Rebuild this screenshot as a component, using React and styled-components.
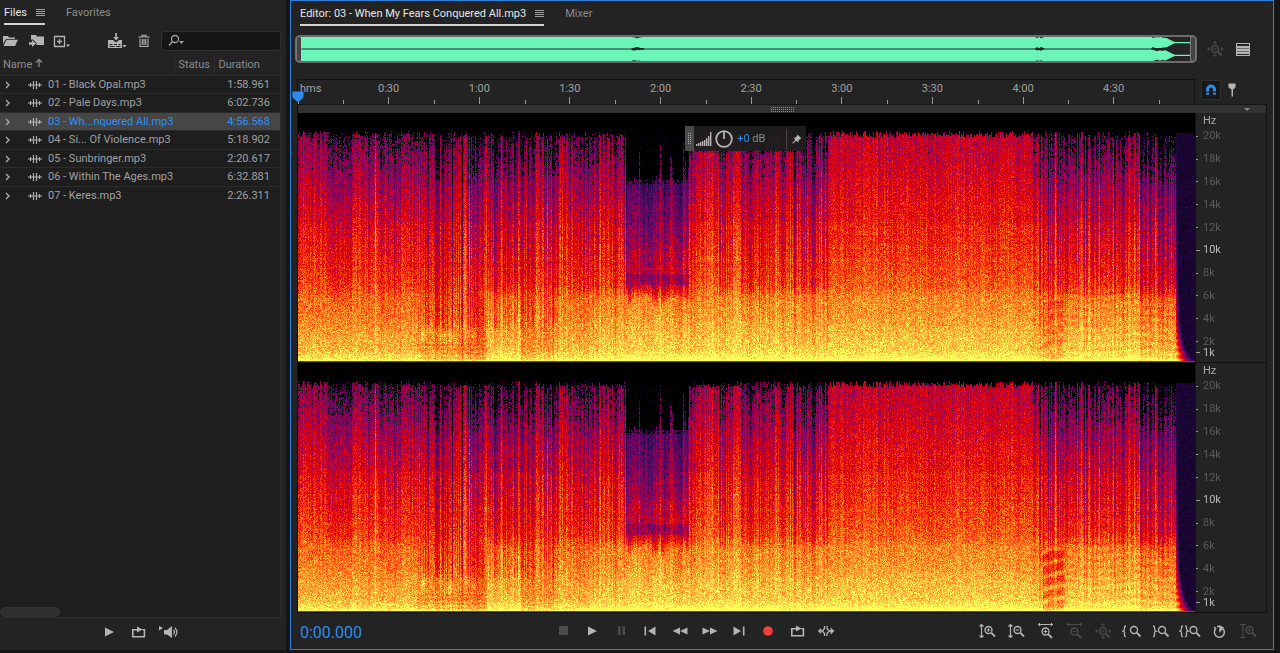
import React, { useLayoutEffect, useRef } from "react";
import styled, { createGlobalStyle } from "styled-components";

const GlobalStyle = createGlobalStyle`
  * {
    box-sizing: border-box;
  }

  body {
    margin: 0;
    background-color: #161616;
    color: #a0a0a0;
    font-family: Roboto, "Noto Sans", sans-serif;
    font-size: 11px;
    line-height: 16px;
  }

  button, input {
    font: inherit;
    color: inherit;
  }
`;

const DURATION = 296.568;

const files = [
  { name: "01 - Black Opal.mp3", duration: "1:58.961" },
  { name: "02 - Pale Days.mp3", duration: "6:02.736" },
  { name: "03 - Wh...nquered All.mp3", duration: "4:56.568", active: true },
  { name: "04 - Si... Of Violence.mp3", duration: "5:18.902" },
  { name: "05 - Sunbringer.mp3", duration: "2:20.617" },
  { name: "06 - Within The Ages.mp3", duration: "6:32.881" },
  { name: "07 - Keres.mp3", duration: "2:26.311" },
];

const rulerLabels = ["0:30", "1:00", "1:30", "2:00", "2:30", "3:00", "3:30", "4:00", "4:30"];

const hzLabels = ["20k", "18k", "16k", "14k", "12k", "10k", "8k", "6k", "4k", "2k"];

/* ---------- layout ---------- */

const MainTemplate = styled.div`
  min-height: 100vh;
  display: grid;
  grid-template-columns: 286px minmax(0, 1fr);
  column-gap: 4px;
  padding: 0 6px 4px 0;
`;

const FilesPanel = styled.section`
  display: flex;
  flex-direction: column;
  padding-right: 5px;
  background-color: #232323;
`;

const EditorPanel = styled.main`
  display: flex;
  flex-direction: column;
  min-width: 0;
  border: 1px solid #2d7fdc;
  background-color: #232323;
`;

const TabBar = styled.nav`
  display: flex;
  gap: 21px;
  height: 25px;
  padding-left: ${(props) => props.$indent}px;
`;

const TabItem = styled.div`
  display: flex;
  align-items: center;
  gap: 9px;
  padding-top: 1px;
  border-bottom: 2px solid ${(props) => (props.$active ? "#d4d4d4" : "transparent")};
`;

const Tab = styled.button`
  padding: 2px 0 0;
  border: 0;
  background: none;
  color: ${(props) => (props.$active ? "#e6e6e6" : "#8c8c8c")};
  white-space: nowrap;
`;

const IconButton = styled.button`
  display: flex;
  align-items: center;
  justify-content: center;
  flex: none;
  width: ${(props) => props.$width || 20}px;
  height: 20px;
  padding: 0;
  border: 0;
  background: none;
  color: ${(props) => (props.$dim ? "#4c4c4c" : "#b4b4b4")};

  svg {
    display: block;
    flex: none;
  }
`;

const Spacer = styled.div`
  flex: 1;
`;

/* ---------- files ---------- */

const FileToolbar = styled.div`
  display: flex;
  align-items: center;
  gap: 6px;
  height: 29px;
  padding-top: 3px;
`;

const SearchBox = styled.label`
  display: flex;
  align-items: center;
  flex: none;
  width: 120px;
  height: 20px;
  padding-left: 5px;
  border: 1px solid #303030;
  border-radius: 3px;
  background-color: #161616;
`;

const SearchInput = styled.input`
  flex: 1;
  min-width: 0;
  border: 0;
  outline: 0;
  background: none;
`;

const FileList = styled.div`
  flex: 1;
  display: flex;
  flex-direction: column;
  border: 1px solid #2e2e2e;
  border-width: 0 1px 1px 0;
  background-color: #1e1e1e;
`;

const FileTable = styled.table`
  width: 100%;
  height: 150px;
  table-layout: fixed;
  border-collapse: collapse;

  th,
  td {
    padding: 1px 0 0;
    text-align: left;
    font-weight: 400;
    line-height: 14px;
    white-space: nowrap;
  }
`;

const HeadRow = styled.tr`
  height: 21px;
  background-color: #232323;

  th {
    padding-left: 4px;
    border-left: 1px solid #2e2e2e;
    color: #8c8c8c;
  }

  th:first-child {
    padding-left: 3px;
    border-left: 0;
  }
`;

const FileRow = styled.tr`
  border-top: 1px solid #2b2b2b;
  background-color: ${(props) => (props.$active ? "#464646" : "transparent")};
  color: ${(props) => (props.$active ? "#3090f4" : "#a0a0a0")};

  td:last-child {
    padding-right: 10px;
    text-align: right;
  }
`;

const NameCell = styled.div`
  display: flex;
  align-items: center;
  padding-left: 5px;

  svg {
    flex: none;
    color: #b0b0b0;
  }

  svg:first-child {
    margin-right: 17px;
  }

  svg + span {
    margin-left: 6px;
  }
`;

const ScrollThumb = styled.div`
  width: 60px;
  height: 10px;
  margin-top: auto;
  border-radius: 5px;
  background-color: #303030;
`;

const PreviewBar = styled.div`
  display: flex;
  align-items: center;
  justify-content: center;
  gap: 10px;
  height: 32px;
  padding: 0 4px 4px 0;
`;

/* ---------- editor ---------- */

const OverviewRow = styled.div`
  display: flex;
  align-items: center;
  gap: 8px;
  height: 28px;
  margin-top: 9px;
  padding: 0 22px 0 4px;
`;

const Overview = styled.div`
  display: flex;
  flex: 1;
  height: 28px;
  border: 2px solid #6c6c6c;
  border-radius: 5px;
  background-color: #252525;
`;

const OverviewHandle = styled.div`
  flex: none;
  width: 4px;
  border-radius: 3px;
  background-color: #444444;
  box-shadow: 0 0 0 1px #777777;
`;

const OverviewWave = styled.svg`
  display: block;
  flex: 1;
  min-width: 0;
  height: 24px;
`;

const RulerRow = styled.div`
  display: flex;
  height: 25px;
  margin-top: 16px;
  padding-left: 6px;
`;

const Ruler = styled.div`
  position: relative;
  flex: 1;
  display: flex;
  border: 1px solid #121212;
  border-bottom: 0;
`;

const RulerCell = styled.div`
  flex: 0 1 auto;
  padding-top: 1px;
  text-align: center;
  background-image: linear-gradient(#9a9a9a, #9a9a9a), linear-gradient(#9a9a9a, #9a9a9a);
  background-repeat: no-repeat;
  background-position: left bottom, center bottom;
  background-size: 1px 4px, 1px ${(props) => (props.$major ? 7 : 0)}px;
`;

const RulerUnit = styled.div`
  padding-left: 2px;
  text-align: left;
`;

const Playhead = styled.svg`
  position: absolute;
  left: -6px;
  bottom: 1px;
`;

const RulerTools = styled.div`
  display: flex;
  flex: none;
  gap: 1px;
  width: 78px;
  padding: 1px 0 0 6px;
`;

const SnapButton = styled(IconButton)`
  border: 1px solid #303030;
  border-radius: 2px;
  background-color: #181818;
  color: #2d8ceb;
`;

const GripBar = styled.div`
  display: flex;
  align-items: center;
  justify-content: space-between;
  height: 9px;
  margin: 0 6px;
  padding: 0 16px;
  border: 1px solid #121212;
  border-bottom: 0;
  background-color: #323232;

  &::before {
    content: "";
    width: 6px;
  }
`;

const GripDots = styled.div`
  width: 23px;
  height: 5px;
  background-image: linear-gradient(transparent 1px, #323232 1px), linear-gradient(90deg, #8a8a8a 1px, transparent 1px);
  background-size: 2px 2px;
`;

const GripArrow = styled.div`
  width: 6px;
  border: 3px solid transparent;
  border-top-color: #8a8a8a;
  border-bottom: 0;
`;

const SpectrumArea = styled.div`
  position: relative;
  flex: 1;
  display: flex;
  flex-direction: column;
  margin: 0 6px;
  border: 1px solid #121212;
  border-top: 0;
`;

const Channel = styled.div`
  flex: 1;
  display: flex;
  min-height: 0;

  & + & {
    border-top: 1px solid #121212;
  }
`;

const CanvasBox = styled.div`
  flex: 1;
  min-width: 0;
  height: 249px;
  border-bottom: 1px solid #55555a;
  background-color: #000;
`;

const Canvas = styled.canvas`
  display: block;
  width: 100%;
  height: 100%;
`;

const HzScale = styled.div`
  flex: none;
  display: flex;
  flex-direction: column;
  width: 71px;
  border-left: 1px solid #121212;
`;

const HzUnit = styled.div`
  height: 12px;
  padding-left: 7px;
  color: #a8a8a8;
`;

const HzMark = styled.div`
  flex: 1;
  display: flex;
  align-items: center;
  gap: ${(props) => (props.$bold ? 3 : 5)}px;
  color: ${(props) => (props.$bold ? "#b8b8b8" : "#5a5a5a")};

  &::before {
    content: "";
    width: ${(props) => (props.$bold ? 4 : 2)}px;
    height: 1px;
    background-color: #9a9a9a;
  }
`;

const HzLow = styled(HzMark)`
  flex: none;
  height: 14px;
  margin: -7px 0 2px;
`;

const GainHud = styled.div`
  position: absolute;
  top: 13px;
  left: 40%;
  display: flex;
  align-items: center;
  width: 121px;
  height: 25px;
  background-color: rgba(30, 30, 30, 0.94);
`;

const HudGrip = styled.div`
  display: flex;
  align-items: center;
  justify-content: center;
  width: 9px;
  height: 100%;
  background-color: #4a4a4a;

  &::before {
    content: "";
    width: 3px;
    height: 11px;
    background-image: linear-gradient(transparent 1px, #4a4a4a 1px), linear-gradient(90deg, #a8a8a8 1px, transparent 1px);
    background-size: 2px 2px;
  }
`;

const HudValue = styled.output`
  flex: 1;
  margin-left: 3px;
  color: #2d8ceb;

  span {
    color: #8c8c8c;
  }
`;

const HudPin = styled(IconButton)`
  border-left: 1px solid #464646;
`;

const Transport = styled.div`
  display: flex;
  align-items: center;
  height: 36px;
  padding: 0 13px 0 9px;
`;

const Timecode = styled.time`
  flex: 0 0 253px;
  padding-top: 4px;
  color: #2d8ceb;
  font-size: 16px;
`;

const PlayControls = styled.div`
  display: flex;
  gap: 9px;
  padding-bottom: 1px;
`;

const ZoomControls = styled.div`
  flex: 1;
  display: flex;
  justify-content: flex-end;
  gap: 5px;
`;

/* ---------- icons ---------- */

const Icon = ({ w = 16, h = 16, fill, children }) => (
  <svg
    width={w}
    height={h}
    viewBox={`0 0 ${w} ${h}`}
    fill={fill ? "currentColor" : "none"}
    stroke={fill ? "none" : "currentColor"}
    strokeWidth="1.3"
    aria-hidden="true"
  >
    {children}
  </svg>
);

const MenuIcon = () => (
  <Icon w={9} h={7} fill>
    <path d="M0 0h9v1H0zM0 2h9v1H0zM0 4h9v1H0zM0 6h9v1H0z" />
  </Icon>
);

const FolderIcon = () => (
  <Icon w={16} h={12} fill>
    <path d="M1 9V1h5l1 1.500h6V4H4z" />
    <path d="M4.500 4.700H16L13 11H1.500z" />
  </Icon>
);

const ImportIcon = () => (
  <Icon w={17} h={14} fill>
    <path d="M3 1h5l1 1.500h7V11H8.500V9L5 5.500H3z" />
    <path d="M1 8.300h3V6l4 3.500L4 13v-2.300H1z" />
  </Icon>
);

const NewIcon = () => (
  <Icon w={18} h={13}>
    <path d="M1.500 1.500h10v10h-10zM6.500 4v5M4 6.500h5" />
    <path d="M13 9.500h4l-2 2.500z" fill="currentColor" stroke="none" />
  </Icon>
);

const SaveAllIcon = () => (
  <Icon w={20} h={16} fill>
    <path d="M1 7h5l3 2.500L12 7h3v8H1zM2.500 11h3v1h-3zm4.500 0h3v1H7zm4.500 0h2v1h-2zM2.500 13h5v1h-5zm6.500 0h4.500v1H9z" fillRule="evenodd" />
    <path d="M8.300 0h1.600v4H12L9.100 7.500 6.200 4h2.100z" />
    <path d="M15.500 12h4l-2 2.500z" />
  </Icon>
);

const TrashIcon = () => (
  <Icon w={12} h={14}>
    <path d="M0.500 3h11M4 3V1.300h4V3M2 4.500v8h8v-8M4.300 5v6M6 5v6M7.700 5v6" strokeWidth="1.100" />
  </Icon>
);

const SearchIcon = () => (
  <Icon w={18} h={14}>
    <circle cx="8" cy="5" r="3.500" />
    <path d="M5.500 7.500 2 11.500" />
    <path d="M12 7h5L14.500 10z" fill="currentColor" stroke="none" />
  </Icon>
);

const ChevronIcon = () => (
  <Icon w={6} h={8}>
    <path d="M1 1l3 3-3 3" />
  </Icon>
);

const WaveIcon = () => (
  <Icon w={14} h={10}>
    <path d="M0 5h14M2.500 3v4M5.500 1v8M8.500 1v8M11.500 3v4" strokeWidth="1.200" />
  </Icon>
);

const ArrowUpIcon = () => (
  <Icon w={8} h={10}>
    <path d="M4 9V1.500M1 4.500 4 1.500l3 3" />
  </Icon>
);

const PlayIcon = () => (
  <Icon w={10} h={10} fill>
    <path d="M1 0.500 10 5 1 9.500z" />
  </Icon>
);

const LoopIcon = () => (
  <Icon w={15} h={12} fill>
    <path d="M1 3h5V0.500l5.500 3L6 6.500V4.500H2.600V10h10V4.500H11.500V3H14.200v8.500H1z" />
  </Icon>
);

const SpeakerIcon = () => (
  <Icon w={20} h={14} fill>
    <path d="M0 1l4 2-4 2.500zM5 5h3l5-4v12L8 9.500H5z" />
    <path d="M14.500 5q2 2 0 4.500M16 3q3.800 4 0 8.500" fill="none" stroke="currentColor" />
  </Icon>
);

const StopIcon = () => (
  <Icon w={9} h={9} fill>
    <path d="M0 0h9v9H0z" />
  </Icon>
);

const PauseIcon = () => (
  <Icon w={9} h={9} fill>
    <path d="M1 0h2.500v9H1zM5.500 0H8v9H5.500z" />
  </Icon>
);

const PrevIcon = () => (
  <Icon w={12} h={10} fill>
    <path d="M0.500 0.500h1.600v9H0.500zM11.500 0.500v9L4 5z" />
  </Icon>
);

const NextIcon = () => (
  <Icon w={12} h={10} fill>
    <path d="M0.500 0.500v9L8 5zM9.900 0.500h1.600v9H9.900z" />
  </Icon>
);

const RewindIcon = () => (
  <Icon w={16} h={8} fill>
    <path d="M8 0.500v7L0.500 4zM15.500 0.500v7L8 4z" />
  </Icon>
);

const ForwardIcon = () => (
  <Icon w={16} h={8} fill>
    <path d="M0.500 0.500v7L8 4zM8 0.500v7L15.500 4z" />
  </Icon>
);

const RecordIcon = () => (
  <Icon w={10} h={10} fill>
    <circle cx="5" cy="5" r="4.800" fill="#f43c3c" />
  </Icon>
);

const SkipIcon = () => (
  <Icon w={17} h={12}>
    <path d="M0.500 6H4M3 3.800.8 6 3 8.200M6.500 1v2.500L4.300 6l2.200 2.500V11M9 1v2.500L11.200 6 9 8.500V11M11.500 6H14" />
    <path d="M12.500 2.500 16.500 6l-4 3.500z" fill="currentColor" stroke="none" />
  </Icon>
);

const Lens = ({ x, y, plus, minus }) => (
  <g transform={`translate(${x} ${y})`}>
    <circle cx="4" cy="4" r="3.500" />
    <path d="M6.700 6.700 10.500 10.500" strokeWidth="1.800" />
    {(plus || minus) && <path d="M2.200 4h3.600" strokeWidth="1" />}
    {plus && <path d="M4 2.200v3.600" strokeWidth="1" />}
  </g>
);

const ZoomVIcon = ({ plus, bar }) => (
  <Icon w={17} h={16}>
    {bar ? (
      <path d="M0 1.500h6M0 14.500h6M3 2v12" strokeWidth="1" />
    ) : (
      <path d="M2.500 2v12M0.500 3.500l2-2 2 2M0.500 12.500l2 2 2-2" strokeWidth="1.200" />
    )}
    <Lens x={5.5} y={3} plus={plus} minus />
  </Icon>
);

const ZoomHIcon = ({ plus }) => (
  <Icon w={17} h={16}>
    <path d="M1 1.500h15M2.500 0v3M14.500 0v3" strokeWidth="1.200" />
    <Lens x={4.5} y={4.5} plus={plus} minus />
  </Icon>
);

const ZoomFullIcon = () => (
  <Icon w={17} h={16}>
    <Lens x={4} y={4} minus />
    <path d="M8 0l2.200 2.500H5.800zM8 16l-2.200-2.500h4.400zM0 8l2.500-2v4zM16.500 8 14 6v4z" fill="currentColor" stroke="none" />
  </Icon>
);

const ZoomInPointIcon = () => (
  <Icon w={20} h={14}>
    <path d="M4 2Q2.300 2 2.500 4T1 7q1.700 0 1.500 3T4 12.500" />
    <Lens x={8} y={2} />
  </Icon>
);

const ZoomOutPointIcon = () => (
  <Icon w={18} h={14}>
    <path d="M1 2q1.700 0 1.500 2T4 7Q2.300 7 2.500 10T1 12.500" />
    <Lens x={6} y={2} />
  </Icon>
);

const ZoomSelIcon = () => (
  <Icon w={22} h={14}>
    <path d="M4 2Q2.300 2 2.500 4T1 7q1.700 0 1.500 3T4 12.500M6 2q1.700 0 1.500 2T9 7Q7.300 7 7.500 10T6 12.500" />
    <Lens x={10.5} y={2} />
  </Icon>
);

const TimerIcon = () => (
  <Icon w={15} h={15}>
    <path d="M4 4.500A5 5 0 1 0 10.500 4.300M5 2.500h3M2 3l2 2" strokeWidth="1.500" />
    <path d="M7.300 9V1l4.700 2.500-2 2.500z" fill="currentColor" stroke="none" />
  </Icon>
);

const ViewIcon = () => (
  <Icon w={14} h={13} fill>
    <path d="M0 0h14v13H0zM1 1v2h12V1zM1 11v1h12v-1z" fillRule="evenodd" />
    <path d="M1 5h12v1H1zM1 8h12v1H1z" fill="#6c6c6c" />
  </Icon>
);

const MagnetIcon = () => (
  <Icon w={12} h={12}>
    <path d="M2.500 7.500V5.500a3.500 3.500 0 0 1 7 0v2" strokeWidth="3" />
    <path d="M1 9.800h3M8 9.800h3" strokeWidth="2" />
  </Icon>
);

const MarkerIcon = () => (
  <Icon w={10} h={14} fill>
    <path d="M1.500 0.500h7v4L6 6.500v7H4.500v-7L1.500 4.500z" />
  </Icon>
);

const GainBarsIcon = () => (
  <Icon w={16} h={14} fill>
    {[2, 3, 4, 5, 6, 8, 10, 14].map((h, i) => (
      <rect key={h} x={i * 2} y={14 - h} width="1.400" height={h} />
    ))}
  </Icon>
);

const KnobIcon = () => (
  <Icon w={18} h={18}>
    <circle cx="9" cy="9" r="7.800" strokeWidth="1.800" />
    <path d="M9 2v7" strokeWidth="1.800" />
  </Icon>
);

const PinIcon = () => (
  <Icon w={10} h={10} fill>
    <path d="M5.500 0.500 9.500 4.500 8 5 6.500 6.500 6.300 8.500 4.200 6.700 1 9.700 0.300 9 3.300 5.800 1.500 3.700 3.500 3.500 5 2z" />
  </Icon>
);

/* ---------- spectrogram ---------- */

const colorStops = [
  [0, 0, 0, 0],
  [0.1, 16, 4, 34],
  [0.22, 42, 8, 80],
  [0.34, 92, 8, 104],
  [0.44, 144, 0, 88],
  [0.54, 200, 0, 44],
  [0.62, 228, 4, 8],
  [0.71, 255, 64, 6],
  [0.8, 255, 132, 30],
  [0.9, 255, 192, 66],
  [1, 255, 255, 92],
];

// level of a full band mix for each frequency in kHz
const curve = [
  [0, 1.06],
  [0.3, 0.98],
  [1, 0.89],
  [2.3, 0.86],
  [4, 0.8],
  [5.6, 0.77],
  [6.8, 0.69],
  [9, 0.65],
  [11, 0.61],
  [13, 0.55],
  [15, 0.5],
  [17, 0.44],
  [19, 0.39],
  [22, 0.33],
];

// from, to (pixels of an 897 wide view), level above 6k, level below 6k, stripe depth
const sections = [
  [0, 30, 0.03, 0, 0.07],
  [30, 56, -0.02, 0, 0.09],
  [56, 96, 0.03, 0, 0.09],
  [96, 118, 0, 0, 0.1],
  [118, 160, -0.03, -0.06, 0.17],
  [160, 189, -0.03, -0.1, 0.19],
  [189, 223, -0.01, 0.03, 0.14],
  [223, 256, -0.04, -0.05, 0.18],
  [256, 290, -0.01, 0, 0.14],
  [290, 328, 0.01, 0.03, 0.14],
  [328, 371, -0.19, 0.04, 0.08],
  [371, 391, -0.12, 0.04, 0.16],
  [391, 420, 0.04, 0.04, 0.11],
  [420, 470, 0, 0.04, 0.14],
  [470, 530, 0.02, 0.04, 0.15],
  [530, 733, 0.06, 0.04, 0.06],
  [733, 765, -0.01, -0.01, 0.14],
  [765, 842, 0, 0.04, 0.14],
  [842, 878, -0.1, -0.01, 0.12],
  [878, 898, -0.6, -0.5, 0],
];

const spikes = [77, 203, 302, 341, 362, 391, 420, 492, 857, 873];

const noise = (a, b, seed) => {
  let h = Math.imul(a + 1, 374761393) ^ Math.imul(b + 7, 668265263) ^ Math.imul(seed, 974711);
  h = Math.imul(h ^ (h >>> 13), 1274126177);
  h = Math.imul(h ^ (h >>> 15), 2246822519);
  return ((h ^ (h >>> 16)) >>> 0) / 4294967296;
};

const lerpStops = (stops, t, index) => {
  let i = 1;
  while (i < stops.length - 1 && stops[i][0] < t) i++;
  const a = stops[i - 1];
  const b = stops[i];
  const k = Math.max(0, Math.min(1, (t - a[0]) / (b[0] - a[0])));
  return a[index] + (b[index] - a[index]) * k;
};

const levelAt = (x, f, col, y, seed) => {
  const [from, , high, low, depth] = sections.find((s) => x < s[1]) || sections[sections.length - 1];
  const grain = noise(col, y, seed) + noise(col, y, seed + 5) - 1;

  // fade out at the end of the song
  if (from === 878) {
    if (f > 20.3) return 0;
    const tail = Math.max(0, 1 - (x - 878) / (2 + 16 * Math.exp(-f / 1.6)));
    const ripple = 0.1 * Math.sin(f * 11);
    return 0.14 + grain * 0.07 + tail * (0.8 + ripple) * Math.exp(-f / 6);
  }

  const edge = 20.2 + (noise(col, 3, 2) - 0.5) * 0.6;
  if (f > edge) return 0;

  const split = 6.8 + (noise(Math.floor(col / 3), 5, 6) - 0.5) * 1.2;
  const mix = Math.max(0, Math.min(1, (split - f) / 1.6));
  const column = noise(col, 0, 11) - 0.5;
  const wide = noise(Math.floor(col / 5), 0, 12) - 0.5;
  let stripe = (column * 1.3 + wide * 0.7) * depth;
  // rests between the drum hits
  if (depth > 0.08 && noise(Math.floor(col / 2), 0, 17) > 0.8) stripe -= depth * 0.5;
  if (x > 733 && x < 878) stripe += Math.cos((x * Math.PI * 2) / 4.4) * 0.05;
  if (spikes.includes(Math.round(x))) stripe += 0.14;

  let v = lerpStops(curve, f, 1) + high * (1 - mix) + low * mix;
  const busy = x > 118 && x < 256;
  v += stripe * (f < 1.5 ? 0.25 : f < 3 ? 0.4 : f < 6 ? (busy ? 0.85 : 0.5) : f < 9 ? 0.9 : 1.15);

  if (x >= 530 && x < 733) v += Math.max(0, f - 11) * 0.011;
  if (x < 30 || (x > 391 && x < 420)) v += Math.max(0, f - 12) * 0.004;

  // breakdown in the middle, little above 16k
  if (x >= 328 && x < 391) {
    if (f > 16.1 && v < (x < 371 ? 0.33 : 0.34)) return noise(col, Math.floor(y / 2), 8) > 0.93 ? 0.1 : 0;
    if (f > 6.8) v = Math.max(v, 0.2 + (16 - f) * 0.015);
    if (f > 6.8 && f < 7.8) v -= 0.05;
    if (f > 7.8 && f < 10) v += 0.04;
  }

  // vocals
  if (x > 122 && x < 178 && f > 1.2 && f < 3.6) {
    const glow = Math.exp(-Math.pow(f - 2.5 - Math.sin(x / 5) * 0.3, 2) * 3);
    v += glow * 0.14 * noise(Math.floor(col / 3), 0, 14);
  }
  if (x > 118 && x < 189 && f < 1.8) v += Math.sin(f * 16) * 0.03;
  if (x > 740 && x < 878 && f < 6.5) {
    const verse = x > 744 && x < 767 && f < 5.4;
    const strength = seed === 2 ? 1 : 0.4;
    const bend = x < 768 ? Math.sqrt(Math.max(0, x - 742)) / 7 : 0.15 * Math.sin(x / 13);
    if (verse) v += (Math.pow(Math.abs(Math.sin((f - bend) * 2.8)), 6) * 0.14 - 0.1) * strength;
    else v += Math.sin((f - bend) * 9) * 0.02;
  }

  v += grain * 0.14;
  if (f > 8 && f < 14) v += noise(0, y, 21) * 0.03 - 0.015;

  // encoder drops quiet bins near the top
  if (f > 15.8) {
    const block = noise(col, Math.floor(y / 3), 9) * 0.09 + noise(col, Math.floor(y / 14), 10) * 0.07 - 0.08;
    const gate = 0.3 + (f - 15.8) * 0.019 + block;
    if (v < gate) return noise(col, y, 4) > 0.75 ? 0.16 : 0;
  }
  return Math.min(1, v);
};

const drawSpectrum = (canvas, seed) => {
  const w = (canvas.width = canvas.clientWidth);
  const h = (canvas.height = canvas.clientHeight);
  const ctx = canvas.getContext("2d");
  const image = ctx.createImageData(w, h);
  const palette = Array.from({ length: 256 }, (_, i) => [1, 2, 3].map((c) => lerpStops(colorStops, i / 255, c)));

  for (let y = 0; y < h; y++) {
    const f = ((h - y) / h) * 22.05;
    for (let col = 0; col < w; col++) {
      const v = levelAt((col / w) * 897, f, col, y, seed);
      const rgb = palette[Math.max(0, Math.min(255, Math.round(v * 255)))];
      const p = (y * w + col) * 4;
      image.data[p] = rgb[0];
      image.data[p + 1] = rgb[1];
      image.data[p + 2] = rgb[2];
      image.data[p + 3] = 255;
    }
  }
  ctx.putImageData(image, 0, 0);
};

const Spectrogram = ({ seed, label }) => {
  const ref = useRef(null);

  useLayoutEffect(() => {
    const draw = () => drawSpectrum(ref.current, seed);
    draw();
    window.addEventListener("resize", draw);
    return () => window.removeEventListener("resize", draw);
  }, [seed]);

  return <Canvas ref={ref} role="img" aria-label={label} />;
};

const ChannelView = ({ seed, label }) => (
  <Channel>
    <CanvasBox>
      <Spectrogram seed={seed} label={label} />
    </CanvasBox>
    <HzScale>
      <HzUnit>Hz</HzUnit>
      {hzLabels.map((hz) => (
        <HzMark key={hz} $bold={hz === "10k"}>
          {hz}
        </HzMark>
      ))}
      <HzLow $bold>1k</HzLow>
    </HzScale>
  </Channel>
);

/* ---------- overview ---------- */

const wavePath = (center) => {
  const top = [];
  const bottom = [];
  for (let x = 0; x <= 890; x += 2) {
    let amp = 5.8;
    if ((x > 330 && x < 344) || (x > 734 && x < 744)) amp -= noise(x, center, 32) * 1.5;
    if (x > 850) amp = 5.6 - noise(x, center, 33) * 1.5;
    if (x > 864) amp = Math.max(0.6, 5.4 - (x - 864) * 0.5);
    top.push(`${x} ${center - amp}`);
    bottom.unshift(`${x} ${center + amp}`);
  }
  return `M${top.join("L")}L${bottom.join("L")}Z`;
};

const FilesArea = () => (
  <FilesPanel>
    <TabBar $indent={4}>
      <TabItem $active>
        <Tab $active>Files</Tab>
        <MenuIcon />
      </TabItem>
      <TabItem>
        <Tab>Favorites</Tab>
      </TabItem>
    </TabBar>
    <FileToolbar>
      <IconButton aria-label="Open file"><FolderIcon /></IconButton>
      <IconButton aria-label="Import file"><ImportIcon /></IconButton>
      <IconButton aria-label="New file"><NewIcon /></IconButton>
      <Spacer />
      <IconButton aria-label="Insert into multitrack"><SaveAllIcon /></IconButton>
      <IconButton $width={22} aria-label="Close selected files"><TrashIcon /></IconButton>
      <SearchBox>
        <SearchIcon />
        <SearchInput aria-label="Search files" />
      </SearchBox>
    </FileToolbar>
    <FileList>
      <FileTable>
        <colgroup>
          <col />
          <col width="40" />
          <col width="66" />
        </colgroup>
        <thead>
          <HeadRow>
            <th>Name <ArrowUpIcon /></th>
            <th>Status</th>
            <th>Duration</th>
          </HeadRow>
        </thead>
        <tbody>
          {files.map((file) => (
            <FileRow key={file.name} $active={file.active}>
              <td>
                <NameCell>
                  <ChevronIcon />
                  <WaveIcon />
                  <span>{file.name}</span>
                </NameCell>
              </td>
              <td />
              <td>{file.duration}</td>
            </FileRow>
          ))}
        </tbody>
      </FileTable>
      <ScrollThumb />
    </FileList>
    <PreviewBar>
      <IconButton aria-label="Play preview"><PlayIcon /></IconButton>
      <IconButton aria-label="Loop preview"><LoopIcon /></IconButton>
      <IconButton aria-label="Auto-play"><SpeakerIcon /></IconButton>
    </PreviewBar>
  </FilesPanel>
);

const EditorArea = () => (
  <EditorPanel>
    <TabBar $indent={9}>
      <TabItem $active>
        <Tab $active>Editor: 03 - When My Fears Conquered All.mp3</Tab>
        <MenuIcon />
      </TabItem>
      <TabItem>
        <Tab>Mixer</Tab>
      </TabItem>
    </TabBar>

    <OverviewRow>
      <Overview>
        <OverviewHandle />
        <OverviewWave viewBox="0 0 890 24" preserveAspectRatio="none">
          <path d={wavePath(5.6)} fill="#6cf5b9" />
          <path d={wavePath(18.4)} fill="#6cf5b9" />
        </OverviewWave>
        <OverviewHandle />
      </Overview>
      <IconButton $dim aria-label="Zoom out full"><ZoomFullIcon /></IconButton>
      <IconButton aria-label="Show spectral display"><ViewIcon /></IconButton>
    </OverviewRow>

    <RulerRow>
      <Ruler>
        <RulerCell style={{ width: `${(15 / DURATION) * 100}%` }}>
          <RulerUnit>hms</RulerUnit>
        </RulerCell>
        {rulerLabels.map((time) => (
          <RulerCell key={time} $major style={{ width: `${(30 / DURATION) * 100}%` }}>
            {time}
          </RulerCell>
        ))}
        <RulerCell style={{ width: `${(11.568 / DURATION) * 100}%` }} />
        <Playhead width="12" height="12">
          <path d="M0.500 0.500h11v6L6 11.500 0.500 6.500z" fill="#2d8ceb" />
        </Playhead>
      </Ruler>
      <RulerTools>
        <SnapButton aria-label="Toggle snapping"><MagnetIcon /></SnapButton>
        <IconButton aria-label="Add marker"><MarkerIcon /></IconButton>
      </RulerTools>
    </RulerRow>

    <GripBar>
      <GripDots />
      <GripArrow />
    </GripBar>

    <SpectrumArea>
      <ChannelView seed={1} label="Left channel spectrogram" />
      <ChannelView seed={2} label="Right channel spectrogram" />
      <GainHud>
        <HudGrip />
        <IconButton aria-label="Gain"><GainBarsIcon /></IconButton>
        <IconButton aria-label="Adjust amplitude"><KnobIcon /></IconButton>
        <HudValue>+0 <span>dB</span></HudValue>
        <HudPin aria-label="Pin"><PinIcon /></HudPin>
      </GainHud>
    </SpectrumArea>

    <Transport>
      <Timecode>0:00.000</Timecode>
      <PlayControls>
        <IconButton $dim aria-label="Stop"><StopIcon /></IconButton>
        <IconButton aria-label="Play"><PlayIcon /></IconButton>
        <IconButton $dim aria-label="Pause"><PauseIcon /></IconButton>
        <IconButton aria-label="Move to previous"><PrevIcon /></IconButton>
        <IconButton $width={22} aria-label="Rewind"><RewindIcon /></IconButton>
        <IconButton aria-label="Fast forward"><ForwardIcon /></IconButton>
        <IconButton aria-label="Move to next"><NextIcon /></IconButton>
        <IconButton aria-label="Record"><RecordIcon /></IconButton>
        <IconButton aria-label="Loop playback"><LoopIcon /></IconButton>
        <IconButton aria-label="Skip selection"><SkipIcon /></IconButton>
      </PlayControls>
      <ZoomControls>
        <IconButton $width={24} aria-label="Zoom in amplitude"><ZoomVIcon plus /></IconButton>
        <IconButton $width={24} aria-label="Zoom out amplitude"><ZoomVIcon /></IconButton>
        <IconButton $width={24} aria-label="Zoom in time"><ZoomHIcon plus /></IconButton>
        <IconButton $width={24} $dim aria-label="Zoom out time"><ZoomHIcon /></IconButton>
        <IconButton $width={24} $dim aria-label="Zoom out full"><ZoomFullIcon /></IconButton>
        <IconButton $width={24} aria-label="Zoom in at in point"><ZoomInPointIcon /></IconButton>
        <IconButton $width={24} aria-label="Zoom in at out point"><ZoomOutPointIcon /></IconButton>
        <IconButton $width={24} aria-label="Zoom to selection"><ZoomSelIcon /></IconButton>
        <IconButton $width={24} aria-label="Timed zoom"><TimerIcon /></IconButton>
        <IconButton $width={24} $dim aria-label="Zoom selected track"><ZoomVIcon plus bar /></IconButton>
      </ZoomControls>
    </Transport>
  </EditorPanel>
);

const App = () => {
  return (
    <>
      <GlobalStyle />
      <MainTemplate>
        <FilesArea />
        <EditorArea />
      </MainTemplate>
    </>
  );
};

export default App;
